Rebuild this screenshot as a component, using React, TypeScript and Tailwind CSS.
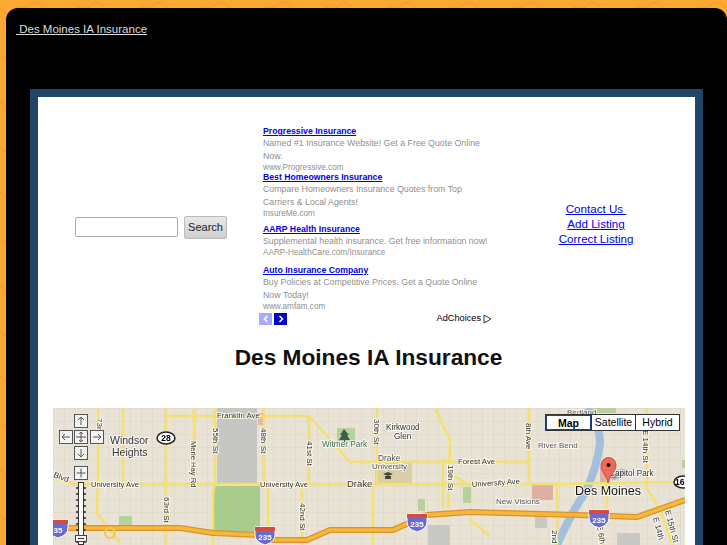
import React from 'react';

const FONT = "font-['Liberation_Sans',Arial,sans-serif]";

const ADS = [
  { title: 'Progressive Insurance', lines: ['Named #1 Insurance Website! Get a Free Quote Online', 'Now.'], url: 'www.Progressive.com', mt: 'mt-0' },
  { title: 'Best Homeowners Insurance', lines: ['Compare Homeowners Insurance Quotes from Top', 'Carriers & Local Agents!'], url: 'InsureMe.com', mt: 'mt-0' },
  { title: 'AARP Health Insurance', lines: ['Supplemental health insurance. Get free information now!'], url: 'AARP-HealthCare.com/Insurance', mt: 'mt-[6px]' },
  { title: 'Auto Insurance Company', lines: ['Buy Policies at Competitive Prices. Get a Quote Online', 'Now Today!'], url: 'www.amfam.com', mt: 'mt-[8px]' },
];

const Label = ({ x, y, size = 8, anchor = 'start', fill = '#333', rotate, children }: any) => (
  <text
    x={x}
    y={y}
    fontSize={size}
    textAnchor={anchor}
    fill={fill}
    stroke="#fff"
    strokeWidth={2}
    strokeOpacity={0.7}
    paintOrder="stroke"
    fontFamily="Liberation Sans, Arial, sans-serif"
    transform={rotate ? `rotate(${rotate} ${x} ${y})` : undefined}
  >
    {children}
  </text>
);

const Shield = ({ x, y, label }: { x: number; y: number; label: string }) => (
  <g>
    <path d={`M${x - 10} ${y - 8} h20 v8 q0 7 -10 10 q-10 -3 -10 -10 z`} fill="#6a6bd0" stroke="#fff" strokeWidth={1} />
    <rect x={x - 10} y={y - 8} width={20} height={4} fill="#d8493f" />
    <text x={x} y={y + 5} fontSize={8} fontWeight="bold" textAnchor="middle" fill="#fff" fontFamily="Liberation Sans, Arial, sans-serif">{label}</text>
  </g>
);

const NavBtn = ({ x, y, d }: { x: number; y: number; d: string }) => (
  <g>
    <rect x={x + 0.5} y={y + 0.5} width={13} height={13} fill="#f4f4f4" stroke="#555" />
    <path d={d} transform={`translate(${x} ${y})`} fill="none" stroke="#555" strokeWidth={1} />
  </g>
);

const FREEWAY = 'M13 120H115L127 120L160 125L207 127L217 132H254L277 122H340L374 107L417 104L524 107L584 109L632 92';

const StreetMap = () => (
  <svg viewBox="0 0 632 137" className="block w-[632px] h-[137px] blur-[0.4px]">
    <defs>
      <pattern id="minor" width="11" height="13" patternUnits="userSpaceOnUse">
        <path d="M0 0H11M0 0V13" stroke="#dcd5c6" strokeWidth="1" fill="none" />
      </pattern>
      <filter id="soft"><feGaussianBlur stdDeviation="1.6" /></filter>
    </defs>
    <rect width="632" height="137" fill="#e9e3d6" />
    <rect width="632" height="137" fill="url(#minor)" />
    {/* areas */}
    <rect x="164" width="40" height="75" fill="#c6c6c2" />
    <rect x="205" y="5" width="5" height="12" fill="#e0b8a8" />
    <rect x="160" y="78" width="47" height="46" fill="#a9cb8e" />
    <rect x="66" y="108" width="13" height="11" fill="#b7d19d" />
    <rect x="284" y="20" width="18" height="14" fill="#b7d19d" />
    <rect x="322" y="55" width="37" height="20" fill="#d9cfa6" />
    <rect x="365" y="91" width="7" height="12" fill="#b7d19d" />
    <rect x="375" y="117" width="22" height="20" fill="#c8c8c4" />
    <rect x="410" y="79" width="8" height="16" fill="#b7d19d" />
    <rect x="479" y="77" width="21" height="15" fill="#ddb0a4" />
    <rect x="482" y="109" width="12" height="11" fill="#c8c8c4" />
    <rect x="564" y="125" width="23" height="12" fill="#c8c8c4" />
    <rect x="540" width="23" height="5" fill="#b7d19d" />
    <rect x="547" y="59" width="10" height="16" fill="#ddb0a4" />
    <rect x="629" y="52" width="3" height="8" fill="#b7d19d" />
    {/* river */}
    <path d="M534 0 Q547 18 547 35 Q544 60 532 85 Q518 105 504 137" fill="none" stroke="#a3bfdc" strokeWidth="8" />
    {/* arterial roads */}
    <g fill="none" stroke="#f3e06e" strokeWidth="2.5">
      <path d="M45 0V60L44 105L67 135" />
      <path d="M70 0V75M113 0V137M141 0V75M162 0V75L160 85V137" />
      <path d="M113 8H256L297 54H476" />
      <path d="M0 70L20 76H500L632 74" />
      <path d="M211 0V76M215 76V137M256 8V76M249 76V137M324 0V76M320 76V137" />
      <path d="M382 0L397 32L395 100M390 50V100M400 67L417 78" />
      <path d="M476 0V74M504 74V137M594 0V80L607 102L620 137M554 50V100M545 115L550 137M417 112L437 128" />
    </g>
    {/* freeway */}
    <path d={FREEWAY} fill="none" stroke="#d9932a" strokeWidth="6" />
    <path d={FREEWAY} fill="none" stroke="#f6b73c" strokeWidth="3.5" />
    <circle cx="57" cy="125" r="5" fill="none" stroke="#f3c850" strokeWidth="2" />
    {/* labels */}
    <Label x={0} y={69} rotate={20}>Blvd</Label>
    <Label x={44} y={10} rotate={90}>73rd St</Label>
    <Label x={57} y={36} size={10.5}>Windsor</Label>
    <Label x={59} y={48} size={10.5}>Heights</Label>
    <Label x={38} y={79} size={7.6}>University Ave</Label>
    <Label x={164} y={10} size={7.8}>Franklin Ave</Label>
    <Label x={111} y={89} rotate={90}>63rd St</Label>
    <Label x={138} y={33} size={7.6} rotate={90}>Merle Hay Rd</Label>
    <Label x={160} y={20} rotate={90}>55th St</Label>
    <Label x={208} y={20} rotate={90}>48th St</Label>
    <Label x={254} y={33} rotate={90}>41st St</Label>
    <Label x={247} y={95} rotate={90}>42nd St</Label>
    <Label x={207} y={79} size={7.6}>University Ave</Label>
    <Label x={269} y={39} size={8.2} fill="#3b6b4a">Witmer Park</Label>
    <Label x={294} y={79} size={9.5}>Drake</Label>
    <Label x={321} y={11} rotate={90}>30th St</Label>
    <Label x={333} y={22} size={8.2}>Kirkwood</Label>
    <Label x={341} y={31} size={8.2}>Glen</Label>
    <Label x={325} y={53} size={8.4} fill="#555">Drake</Label>
    <Label x={319} y={61} size={8} fill="#555">University</Label>
    <Label x={405} y={56} size={7.8}>Forest Ave</Label>
    <Label x={395} y={57} rotate={90}>19th St</Label>
    <Label x={485} y={40} size={8} fill="#555">River Bend</Label>
    <Label x={473} y={15} rotate={90}>8th Ave</Label>
    <Label x={419} y={79} size={7.6} rotate={-4}>University Ave</Label>
    <Label x={443} y={96} size={8} fill="#555">New Visions</Label>
    <Label x={590} y={22} rotate={90}>E 14th St</Label>
    <Label x={499} y={122} rotate={90}>2nd</Label>
    <Label x={544} y={118} rotate={80}>E 6th</Label>
    <Label x={600} y={110} rotate={75}>E 14th</Label>
    <Label x={612} y={103} rotate={75}>E 15th St</Label>
    <Label x={514} y={7} size={8} fill="#555">Birdland</Label>
    {/* route shields */}
    <ellipse cx="113" cy="30" rx="9" ry="6" fill="#fff" stroke="#222" strokeWidth="1.5" />
    <text x="113" y="33" fontSize="8.5" fontWeight="bold" textAnchor="middle" fontFamily="Liberation Sans, Arial, sans-serif">28</text>
    <ellipse cx="630" cy="74" rx="9" ry="6" fill="#fff" stroke="#222" strokeWidth="1.5" />
    <text x="622" y="77" fontSize="8.5" fontWeight="bold" fontFamily="Liberation Sans, Arial, sans-serif">16</text>
    <Shield x={212} y={127} label="235" />
    <Shield x={364} y={114} label="235" />
    <Shield x={546} y={110} label="235" />
    <Shield x={5} y={120} label="35" />
    {/* tree and school cap */}
    <path d="M291 21l-4 6h2l-3 5h5v2h1v-2h5l-3-5h2z" fill="#3f5f48" />
    <path d="M330 66l5-2 5 2-5 2zM332 68v3h6v-3z" fill="#444" />
    {/* pin, shadow first so Capitol Park reads through it */}
    <path d="M557 68L572 61L575 65L560 71Z" fill="#333" opacity="0.8" filter="url(#soft)" />
    <Label x={556} y={68} size={8.2}>Capitol Park</Label>
    <path d="M555 75C553 66 548 64 548 57a7.5 7.5 0 0 1 15 0C563 64 557 66 555 75Z" fill="#ee6a5c" stroke="#a33" strokeWidth="0.7" />
    <circle cx="555.5" cy="57" r="2" fill="#111" />
    <Label x={522} y={87} size={12.5} fill="#111">Des Moines</Label>
    {/* pan and zoom control */}
    <NavBtn x={21} y={6} d="M7 11V3M4 6l3-3 3 3" />
    <NavBtn x={6} y={22} d="M11 7H3M6 4L3 7l3 3" />
    <NavBtn x={21} y={22} d="M7 2v10M2 7h10M5 4l2-2 2 2M5 10l2 2 2-2" />
    <NavBtn x={37} y={22} d="M3 7h8M8 4l3 3-3 3" />
    <NavBtn x={21} y={38} d="M7 3v8M4 8l3 3 3-3" />
    <NavBtn x={21} y={58} d="M7 2.5v9M2.5 7h9" />
    {[0, 1, 2, 3, 4, 5, 6, 7, 8, 9].map(i => (
      <rect key={i} x="23" y={79 + i * 6} width="10" height="2" rx="1" fill="#444" />
    ))}
    <rect x="25.5" y="74.5" width="5" height="62" fill="#fff" stroke="#333" />
    <rect x="22.5" y="127.5" width="11" height="6" fill="#f4f4f4" stroke="#444" />
    <path d="M25 130.5h6" stroke="#333" />
  </svg>
);

export default function App() {
  return (
    <div className={`${FONT} relative h-[545px] w-[727px] overflow-hidden bg-[#fea733] pt-2 pl-[6px]`}>
      {/* faint wallpaper behind the panel */}
      <svg className="absolute inset-0" width="727" height="545">
        <defs>
          <pattern id="paper" width="62" height="46" patternUnits="userSpaceOnUse">
            <path d="M6 20Q14 2 26 8Q34 -4 44 8M14 40Q22 26 34 32Q44 22 56 34M0 8Q3 14 8 14" fill="none" stroke="#ec9a30" strokeWidth="1" />
          </pattern>
        </defs>
        <rect width="727" height="545" fill="url(#paper)" />
      </svg>
      <div className="relative h-[537px] rounded-t-xl bg-black">
        <div className="pt-[14px] pl-[10px] h-[81px]">
          <a href="#" className="block w-fit text-[11.5px] leading-[14px] text-[#dddddd] underline">&nbsp;Des Moines IA Insurance</a>
        </div>
        <div className="ml-6 w-[673px] h-[456px] border-8 border-b-0 border-[#224466] bg-white">
          <div className="flex h-[232px]">
            <div className="w-[225px] flex items-center pl-[37px] gap-[6px] pt-[28px]">
              <input type="text" className="w-[103px] h-[20px] rounded-[2px] border border-[#aaa] bg-white" />
              <button className="w-[43px] h-[23px] rounded-[2px] border border-[#bbb] bg-gradient-to-b from-[#e8e8e8] to-[#cfcfcf] text-[11px] text-[#222]">Search</button>
            </div>
            <div className="w-[229px] pt-[29px] text-[8.8px]">
              {ADS.map(ad => (
                <div key={ad.title} className={ad.mt}>
                  <a href="#" className="block font-bold text-[8.7px] text-[#0000ee] underline leading-[11px]">{ad.title}</a>
                  {ad.lines.map(line => (
                    <div key={line} className="text-[#8f8f8f] leading-[13px] whitespace-nowrap">{line}</div>
                  ))}
                  <div className="text-[#8f8f8f] text-[8.2px] leading-[9px]">{ad.url}</div>
                </div>
              ))}
              <div className="flex items-center h-[12px] mt-[2px] -ml-[4px]">
                <span className="w-[13px] h-3 bg-[#a9a9ff] flex items-center justify-center">
                  <svg width="8" height="8" viewBox="0 0 8 8"><path d="M5.5 1L2.5 4l3 3" fill="none" stroke="#fff" strokeWidth="1.6" /></svg>
                </span>
                <span className="ml-[2px] w-[13px] h-3 bg-[#0000cc] flex items-center justify-center">
                  <svg width="8" height="8" viewBox="0 0 8 8"><path d="M2.5 1l3 3-3 3" fill="none" stroke="#fff" strokeWidth="1.6" /></svg>
                </span>
                <span className="ml-auto text-[9.2px] text-black">AdChoices</span>
                <svg className="ml-[2px]" width="9" height="10" viewBox="0 0 9 10"><path d="M1 1l7 4-7 4z" fill="none" stroke="#333" strokeWidth="1" /></svg>
              </div>
            </div>
            <div className="flex-1 flex flex-col items-center pt-[104px] pl-[5px] text-[11.6px] text-[#0000ee] leading-[15.2px]">
              <a href="#" className="underline">Contact Us&nbsp;</a>
              <a href="#" className="underline">Add Listing</a>
              <a href="#" className="underline">Correct Listing</a>
            </div>
          </div>
          <h1 className="text-center pl-[4px] text-[22.7px] font-bold text-[#111] leading-[28px] mt-[14px] mb-[37px]">Des Moines IA Insurance</h1>
          <div className="relative ml-[15px] w-[632px]">
            <StreetMap />
            <div className="absolute top-[6px] left-[492px] flex h-[17px] w-[135px] border border-[#333] bg-white text-[10.5px] text-black leading-[15px]">
              <button className="w-[45px] font-bold border border-[#224488]">Map</button>
              <button className="w-[44px] border-l border-[#333]">Satellite</button>
              <button className="flex-1 border-l border-[#333]">Hybrid</button>
            </div>
          </div>
        </div>
      </div>
    </div>
  );
}
